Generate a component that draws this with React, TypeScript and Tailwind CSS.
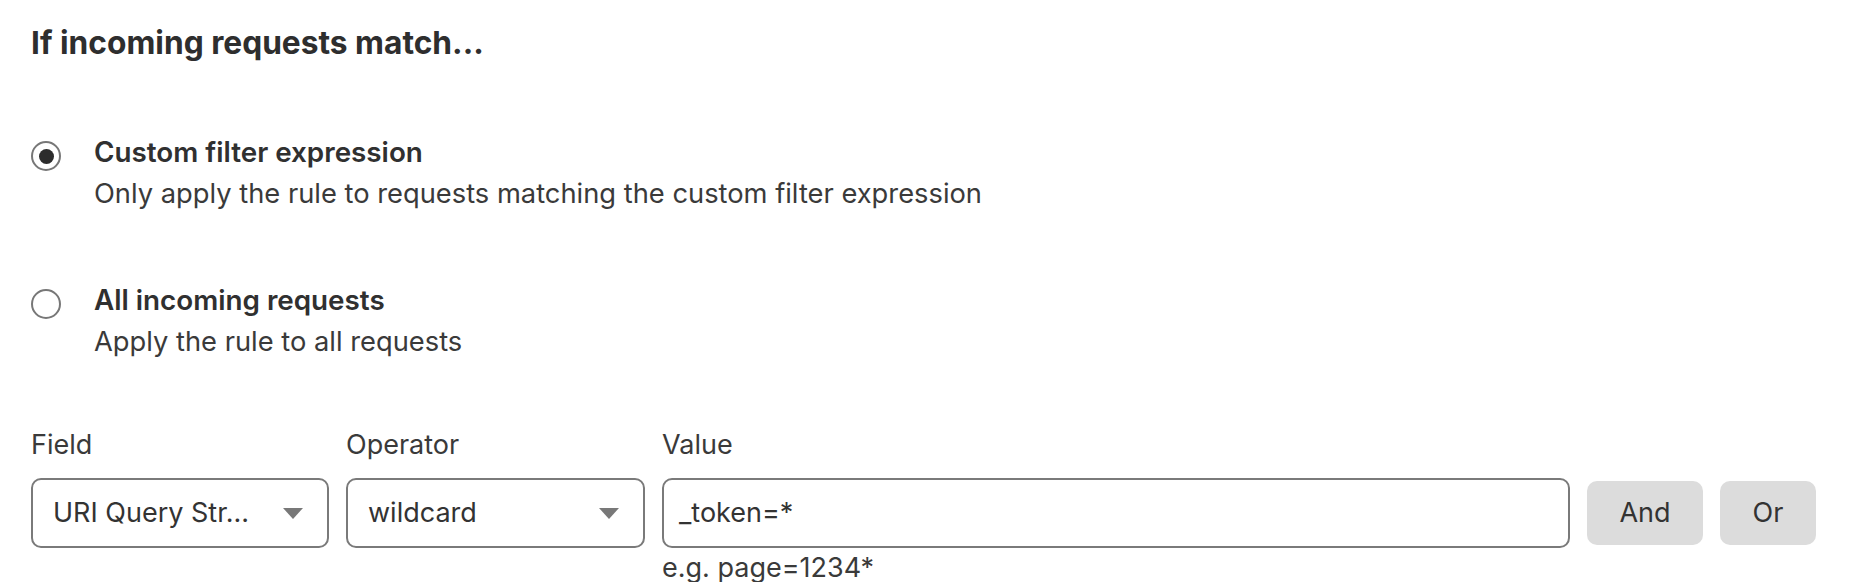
import React from "react";

function Caret() {
  return (
    <svg width="20" height="11" viewBox="0 0 20 11" className="shrink-0">
      <path d="M0 0 L20 0 L10 11 Z" fill="#787878" />
    </svg>
  );
}

function Radio({ checked }: { checked: boolean }) {
  return (
    <div className="mt-[10px] flex h-[30px] w-[30px] shrink-0 items-center justify-center rounded-full border-2 border-[#777777] bg-white">
      {checked && <div className="h-[15px] w-[15px] rounded-full bg-[#2c2c2c]" />}
    </div>
  );
}

function Option({ checked, title, desc }: { checked: boolean; title: string; desc: string }) {
  return (
    <div className="flex items-start gap-[33px]">
      <Radio checked={checked} />
      <div className="flex flex-col">
        <div className="text-[27.8px] leading-[42px] font-semibold text-[#303030]">{title}</div>
        <div className="text-[27.3px] leading-[42px] text-[#3a3a3a]">{desc}</div>
      </div>
    </div>
  );
}

export default function App() {
  return (
    <div
      className="min-h-[582px] w-[1852px] bg-white pl-[31px] pt-[23px]"
      style={{ fontFamily: "Inter, 'Noto Sans', sans-serif" }}
    >
      <h2 className="text-[31.7px] leading-[40px] font-bold text-[#2e2e2e]">If incoming requests match...</h2>

      <div className="mt-[68px] flex flex-col gap-[64px]">
        <Option
          checked
          title="Custom filter expression"
          desc="Only apply the rule to requests matching the custom filter expression"
        />
        <Option checked={false} title="All incoming requests" desc="Apply the rule to all requests" />
      </div>

      <div className="mt-[64px] grid grid-cols-[298px_299px_908px_116px_96px] gap-x-[17px]">
        <div className="text-[27px] leading-[36px] text-[#3a3a3a]">Field</div>
        <div className="text-[27px] leading-[36px] text-[#3a3a3a]">Operator</div>
        <div className="text-[27px] leading-[36px] text-[#3a3a3a]">Value</div>
        <div />
        <div />

        <div className="mt-[15px] flex h-[70px] items-center justify-between rounded-[10px] border-2 border-[#7a7a7a] bg-white pl-[20px] pr-[24px]">
          <span className="text-[27px] text-[#333333]">URI Query Str...</span>
          <Caret />
        </div>
        <div className="mt-[15px] flex h-[70px] items-center justify-between rounded-[10px] border-2 border-[#7a7a7a] bg-white pl-[20px] pr-[24px]">
          <span className="text-[27px] text-[#333333]">wildcard</span>
          <Caret />
        </div>
        <div className="mt-[15px] flex h-[70px] items-center rounded-[10px] border-2 border-[#7a7a7a] bg-white px-[15px]">
          <span className="text-[27px] text-[#333333]">_token=*</span>
        </div>
        <div className="mt-[15px] flex h-[70px] items-center">
          <button className="flex h-[64px] w-full items-center justify-center rounded-[10px] bg-[#dcdcdc] text-[27px] text-[#333333]">
            And
          </button>
        </div>
        <div className="mt-[15px] flex h-[70px] items-center">
          <button className="flex h-[64px] w-full items-center justify-center rounded-[10px] bg-[#dcdcdc] text-[27px] text-[#333333]">
            Or
          </button>
        </div>

        <div />
        <div />
        <div className="mt-[4px] text-[27px] leading-[32px] text-[#3a3a3a]">e.g. page=1234*</div>
        <div />
        <div />
      </div>
    </div>
  );
}
